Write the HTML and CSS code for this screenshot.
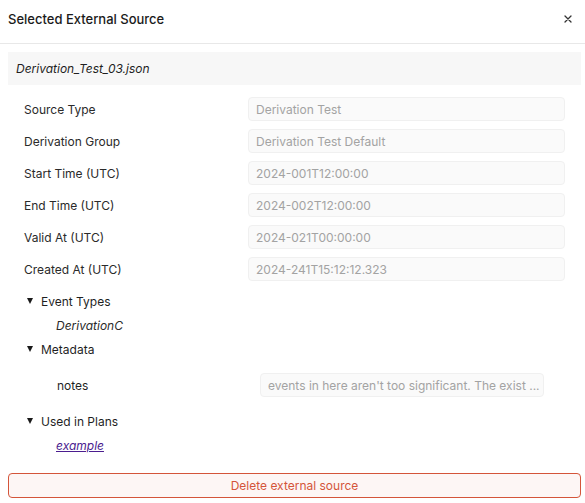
FILE: index.html
```html
<!DOCTYPE html>
<html>
<head>
<meta charset="utf-8">
<link rel="stylesheet" href="styles.css">
</head>
<body>
<div class="panel">
  <div class="header">
    <div class="title">Selected External Source</div>
    <div class="close">
      <svg width="8" height="8" viewBox="0 0 8 8"><path d="M1 1L7 7M7 1L1 7" stroke="#333" stroke-width="1.3" stroke-linecap="round"/></svg>
    </div>
  </div>
  <div class="body">
    <div class="filebar">Derivation_Test_03.json</div>
    <div class="fields">
      <div class="row"><div class="label">Source Type</div><div class="input">Derivation Test</div></div>
      <div class="row"><div class="label">Derivation Group</div><div class="input">Derivation Test Default</div></div>
      <div class="row"><div class="label">Start Time (UTC)</div><div class="input">2024-001T12:00:00</div></div>
      <div class="row"><div class="label">End Time (UTC)</div><div class="input">2024-002T12:00:00</div></div>
      <div class="row"><div class="label">Valid At (UTC)</div><div class="input">2024-021T00:00:00</div></div>
      <div class="row"><div class="label">Created At (UTC)</div><div class="input">2024-241T15:12:12.323</div></div>
    </div>
    <div class="sections">
      <div class="section">
        <div class="sec-head"><span class="tri"></span>Event Types</div>
        <div class="sec-item italic">DerivationC</div>
      </div>
      <div class="section">
        <div class="sec-head"><span class="tri"></span>Metadata</div>
        <div class="meta-row"><div class="meta-label">notes</div><div class="input meta-input">events in here aren't too significant. The exist ...</div></div>
      </div>
      <div class="section">
        <div class="sec-head"><span class="tri"></span>Used in Plans</div>
        <div class="sec-item"><a class="plan-link" href="#">example</a></div>
      </div>
    </div>
    <button class="delete">Delete external source</button>
  </div>
</div>
</body>
</html>
```

FILE: styles.css
```css
* { box-sizing: border-box; }
html, body { margin: 0; padding: 0; background: #fff; }
body {
  font-family: Inter, "Noto Sans", sans-serif;
  font-size: 12px;
  color: #1f1f1f;
  width: 585px;
  height: 503px;
  overflow: hidden;
}
.header {
  height: 44px;
  display: flex;
  align-items: flex-start;
  justify-content: space-between;
  padding: 10px 11px 0 8px;
  border-bottom: 1px solid #e8e8e8;
}
.title { font-size: 13px; font-weight: 500; color: #1a1a1a; line-height: 18px; }
.close { width: 12px; height: 18px; display: flex; align-items: center; justify-content: center; }
.body { padding: 8px 4px 0 8px; }
.filebar {
  height: 33px;
  background: #f7f7f7;
  display: flex;
  align-items: center;
  padding-left: 8px;
  font-style: italic;
  font-size: 12px;
  color: #1f1f1f;
}
.fields { padding: 12px 16px 0 16px; display: flex; flex-direction: column; gap: 8px; }
.row { display: flex; align-items: center; height: 24px; }
.label { width: 224px; color: #2a2a2a; }
.input {
  flex: 1;
  height: 24px;
  border: 1px solid #f0f0f0;
  background: #fafafa;
  border-radius: 4px;
  display: flex;
  align-items: center;
  padding-left: 7px;
  color: #a3a3a3;
}
.sections { padding-top: 8px; }
.section { padding-left: 18px; }
.sec-head { display: flex; align-items: center; height: 24px; color: #1f1f1f; }
.tri {
  width: 0; height: 0;
  border-left: 3.5px solid transparent;
  border-right: 3.5px solid transparent;
  border-top: 6px solid #1a1a1a;
  margin-left: 1px;
  margin-right: 8px;
}
.sec-item { padding-left: 30px; height: 24px; display: flex; align-items: center; }
.italic { font-style: italic; color: #2a2a2a; }
.meta-row { display: flex; align-items: center; height: 48px; padding-left: 31px; padding-right: 37px; }
.meta-label { width: 203px; }
.meta-input { flex: 1; }
.plan-link { color: #4b1d8f; font-style: italic; text-decoration: underline; }
.delete {
  display: block;
  width: 573px;
  height: 25px;
  margin-top: 16px;
  border: 1px solid #d4553a;
  border-radius: 4px;
  background: #fdf6f5;
  color: #d4553a;
  font-family: Inter, "Noto Sans", sans-serif;
  font-size: 12px;
}
```
